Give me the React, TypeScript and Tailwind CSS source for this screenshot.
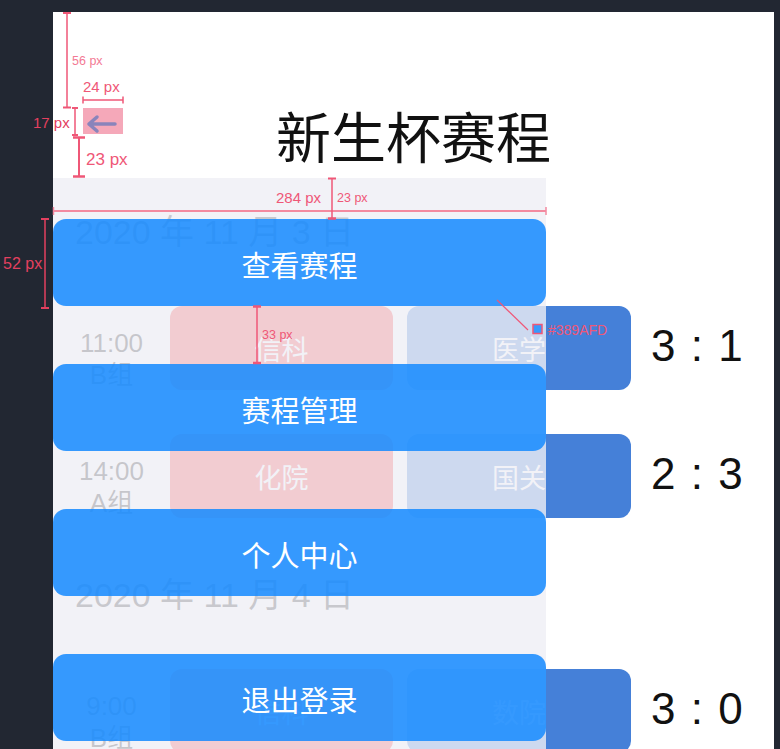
import React from "react";

type R = { time: string; group: string; a: string; b: string; score: string };

const day1: R[] = [
  { time: "11:00", group: "B组", a: "信科", b: "医学", score: "3 : 1" },
  { time: "14:00", group: "A组", a: "化院", b: "国关", score: "2 : 3" },
];
const day2: R[] = [{ time: "9:00", group: "B组", a: "信科", b: "数院", score: "3 : 0" }];

function Row({ r }: { r: R }) {
  return (
    <div className="flex h-[84px] shrink-0 items-center">
      <div className="flex w-[117px] flex-col items-center self-start pt-[21px] text-[26px] leading-[32px] text-[#262626]">
        <span>{r.time}</span>
        <span>{r.group}</span>
      </div>
      <div className="flex h-full w-[223px] items-center justify-center rounded-[12px] bg-[#ff4444] font-['Noto_Sans_CJK_SC',sans-serif] text-[27px] leading-none text-white">
        {r.a}
      </div>
      <div className="ml-[14px] flex h-full w-[224px] items-center justify-center rounded-[12px] bg-[#4580d8] font-['Noto_Sans_CJK_SC',sans-serif] text-[27px] leading-none text-white">
        {r.b}
      </div>
      <div className="ml-[20px] pb-[5px] text-[44px] leading-[44px] text-[#111] [word-spacing:3px]">
        {r.score}
      </div>
    </div>
  );
}

function Section({ date, rows, className }: { date: string; rows: R[]; className: string }) {
  return (
    <div className={className}>
      <div className="ml-[22px] h-[34px] text-[34px] leading-[34px] whitespace-nowrap text-[#2e2e2e]">{date}</div>
      <div className="mt-[57px] flex flex-col gap-[44px]">
        {rows.map((r, i) => (
          <Row key={i} r={r} />
        ))}
      </div>
    </div>
  );
}

const buttons = ["查看赛程", "赛程管理", "个人中心", "退出登录"];

export default function App() {
  const c = "#ef5777";
  const d = "#e3405f";
  return (
    <div className="relative h-[749px] w-[780px] overflow-hidden bg-[#222732] pl-[53px] pt-[12px] font-['Liberation_Sans','Noto_Sans_CJK_SC',sans-serif]">
      <div className="relative h-[737px] w-[721px] overflow-hidden bg-white">
        {/* header */}
        <div className="grid h-[166px] grid-cols-[1fr_auto_1fr] items-start pt-[95px]">
          <div className="ml-[30px] mt-[1px] flex h-[26px] w-[40px] items-center justify-center bg-[#f5a8b9]">
            <svg width="40" height="26" viewBox="0 0 40 26">
              <path
                d="M6 16 H32 M6 16 L14 9 M6 16 L14 23"
                stroke="#8a84bb"
                strokeWidth="3.5"
                strokeLinecap="round"
                strokeLinejoin="round"
                fill="none"
              />
            </svg>
          </div>
          <h1 className="font-['Noto_Sans_CJK_SC',sans-serif] text-[55px] font-normal leading-[55px] text-[#111]">
            新生杯赛程
          </h1>
          <div />
        </div>

        {/* list */}
        <div className="pt-[37px]">
          <Section date="2020 年 11 月 3 日" rows={day1} className="" />
          <Section date="2020 年 11 月 4 日" rows={day2} className="mt-[60px]" />
        </div>

        {/* drawer overlay */}
        <div className="absolute bottom-0 left-0 top-[166px] w-[493px] bg-[rgba(239,239,245,0.8)]">
          <div className="flex flex-col gap-[58px] pt-[41px]">
            {buttons.map((b) => (
              <div
                key={b}
                className="flex h-[87px] items-center justify-center rounded-[13px] bg-[rgba(20,137,255,0.85)] pt-[3px] font-['Noto_Sans_CJK_SC',sans-serif] text-[29px] leading-none text-white"
              >
                {b}
              </div>
            ))}
          </div>
        </div>
      </div>

      {/* measurement annotations */}
      <svg className="pointer-events-none absolute left-0 top-0" width="780" height="749" viewBox="0 0 780 749">
        <g stroke={c} strokeWidth="1.5" fill="none">
          <line x1="67" y1="12" x2="67" y2="108" />
          <line x1="63" y1="13" x2="71" y2="13" strokeWidth="2" />
          <line x1="63" y1="107.5" x2="71" y2="107.5" strokeWidth="2" />

          <line x1="83" y1="100" x2="123" y2="100" />
          <line x1="83" y1="96.5" x2="83" y2="103.5" />
          <line x1="123" y1="96.5" x2="123" y2="103.5" />

          <line x1="75" y1="108" x2="75" y2="135" />
          <line x1="72" y1="108" x2="78" y2="108" strokeWidth="2" />
          <line x1="72" y1="135" x2="78" y2="135" strokeWidth="2" />

          <line x1="79" y1="137" x2="79" y2="177" strokeWidth="2" />
          <line x1="73" y1="137.5" x2="85" y2="137.5" strokeWidth="2.5" />
          <line x1="73" y1="176.5" x2="85" y2="176.5" strokeWidth="2.5" />

          <line x1="53" y1="211" x2="546" y2="211" stroke="#f38aa0" strokeWidth="2" />
          <line x1="53.5" y1="207" x2="53.5" y2="215" stroke="#f38aa0" strokeWidth="1.5" />
          <line x1="546" y1="207" x2="546" y2="215" stroke="#f38aa0" strokeWidth="1.5" />

          <line x1="332" y1="178" x2="332" y2="219" />
          <line x1="328" y1="178.5" x2="336" y2="178.5" strokeWidth="2" />
          <line x1="328" y1="218.5" x2="336" y2="218.5" strokeWidth="2.5" />

          <line x1="45" y1="219" x2="45" y2="308" stroke={d} />
          <line x1="41" y1="219" x2="49" y2="219" stroke={d} strokeWidth="2" />
          <line x1="41" y1="308" x2="49" y2="308" stroke={d} strokeWidth="2" />

          <line x1="257" y1="306" x2="257" y2="363" />
          <line x1="253" y1="306.5" x2="261" y2="306.5" strokeWidth="2.5" />
          <line x1="253" y1="363" x2="261" y2="363" strokeWidth="2.5" />

          <line x1="497" y1="300" x2="528" y2="330" strokeWidth="1.2" />
          <rect x="533" y="324.5" width="9" height="9" fill="#389afd" stroke={c} strokeWidth="1.5" />
        </g>
      </svg>

      <div className="absolute left-[72px] top-[55px] text-[12.5px] leading-none text-[#f37a94]">56 px</div>
      <div className="absolute left-[83px] top-[79px] text-[15px] leading-none text-[#ef5777]">24 px</div>
      <div className="absolute left-[33px] top-[115px] text-[15px] leading-none text-[#e3405f]">17 px</div>
      <div className="absolute left-[86px] top-[151px] text-[17px] leading-none text-[#ef5777]">23 px</div>
      <div className="absolute left-[276px] top-[190px] text-[15px] leading-none text-[#ef5777]">284 px</div>
      <div className="absolute left-[337px] top-[192px] text-[12.5px] leading-none text-[#ef5777]">23 px</div>
      <div className="absolute left-[3px] top-[256px] text-[16px] leading-none text-[#e3405f]">52 px</div>
      <div className="absolute left-[262px] top-[329px] text-[12.5px] leading-none text-[#ef5777]">33 px</div>
      <div className="absolute left-[548px] top-[323px] text-[14px] leading-none text-[#ef5777]">#389AFD</div>
    </div>
  );
}
